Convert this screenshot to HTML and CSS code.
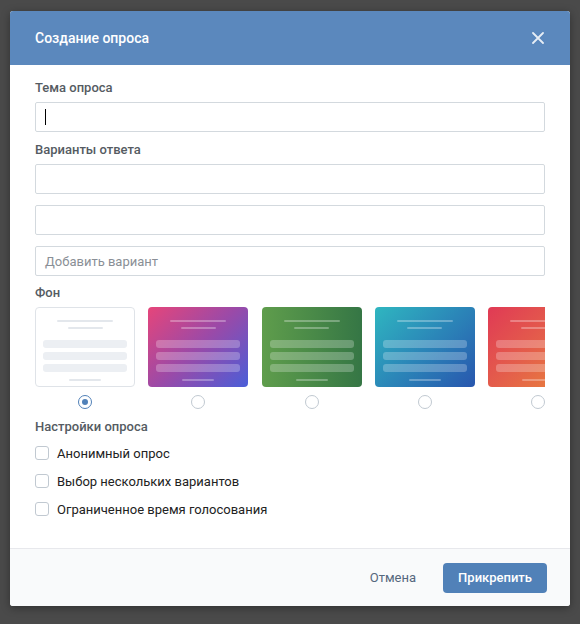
FILE: index.html
```html
<!DOCTYPE html>
<html lang="ru">
<head>
<meta charset="utf-8">
<title>Создание опроса</title>
<link rel="stylesheet" href="styles.css">
</head>
<body>
<div class="modal">
  <div class="modal-header">
    <div class="modal-title">Создание опроса</div>
    <svg class="close" width="12" height="12" viewBox="0 0 12 12"><path d="M1 1L11 11M11 1L1 11" stroke="#fff" stroke-width="1.8" stroke-linecap="round" opacity="0.85"/></svg>
  </div>
  <div class="modal-body">
    <div class="label">Тема опроса</div>
    <div class="input first"><span class="caret"></span></div>

    <div class="label">Варианты ответа</div>
    <div class="input"></div>
    <div class="input"></div>
    <div class="input placeholder">Добавить вариант</div>

    <div class="label">Фон</div>
    <div class="bg-row">
      <div class="bg-item">
        <div class="thumb thumb-white">
          <div class="ln ln1"></div><div class="ln ln2"></div>
          <div class="bar"></div><div class="bar"></div><div class="bar"></div>
          <div class="ln ln3"></div>
        </div>
        <div class="radio checked"></div>
      </div>
      <div class="bg-item">
        <div class="thumb thumb-pink">
          <div class="ln ln1"></div><div class="ln ln2"></div>
          <div class="bar"></div><div class="bar"></div><div class="bar"></div>
          <div class="ln ln3"></div>
        </div>
        <div class="radio"></div>
      </div>
      <div class="bg-item">
        <div class="thumb thumb-green">
          <div class="ln ln1"></div><div class="ln ln2"></div>
          <div class="bar"></div><div class="bar"></div><div class="bar"></div>
          <div class="ln ln3"></div>
        </div>
        <div class="radio"></div>
      </div>
      <div class="bg-item">
        <div class="thumb thumb-blue">
          <div class="ln ln1"></div><div class="ln ln2"></div>
          <div class="bar"></div><div class="bar"></div><div class="bar"></div>
          <div class="ln ln3"></div>
        </div>
        <div class="radio"></div>
      </div>
      <div class="bg-item">
        <div class="thumb thumb-red">
          <div class="ln ln1"></div><div class="ln ln2"></div>
          <div class="bar"></div><div class="bar"></div><div class="bar"></div>
          <div class="ln ln3"></div>
        </div>
        <div class="radio"></div>
      </div>
    </div>

    <div class="label settings">Настройки опроса</div>
    <div class="check-row"><span class="checkbox"></span><span>Анонимный опрос</span></div>
    <div class="check-row"><span class="checkbox"></span><span>Выбор нескольких вариантов</span></div>
    <div class="check-row"><span class="checkbox"></span><span>Ограниченное время голосования</span></div>
  </div>
  <div class="modal-footer">
    <span class="cancel">Отмена</span>
    <span class="btn">Прикрепить</span>
  </div>
</div>
</body>
</html>
```
FILE: styles.css
```css
* { box-sizing: border-box; }
html, body { margin: 0; padding: 0; }
body {
  background: #4a4a4a;
  font-family: Roboto, "Liberation Sans", Arial, sans-serif;
  width: 580px;
  height: 624px;
  overflow: hidden;
  padding: 11px 10px 0 10px;
}
.modal {
  width: 560px;
  background: #fff;
  border-radius: 3px;
  overflow: hidden;
  box-shadow: 0 2px 8px rgba(0,0,0,0.35);
}
.modal-header {
  height: 54px;
  background: #5b88bd;
  display: flex;
  align-items: center;
  justify-content: space-between;
  padding: 0 26px 0 25px;
}
.modal-title {
  color: #fff;
  font-size: 14px;
  font-weight: 500;
}
.modal-body {
  padding: 15px 25px 25px 25px;
}
.label {
  font-size: 13px;
  font-weight: 500;
  line-height: 16px;
  color: #555b62;
  margin-bottom: 6px;
}
.input {
  height: 30px;
  border: 1px solid #d3d9de;
  border-radius: 2px;
  margin-bottom: 11px;
  font-size: 13px;
  display: flex;
  align-items: center;
  padding-left: 9px;
}
.input.first { margin-bottom: 10px; }
.caret {
  width: 1px;
  height: 16px;
  background: #000;
}
.placeholder { color: #8a8f96; margin-bottom: 9px; }
.bg-row {
  display: flex;
  gap: 13.25px;
  overflow: hidden;
  margin-top: 2px;
}
.bg-item {
  flex: 0 0 100px;
  display: flex;
  flex-direction: column;
  align-items: center;
}
.thumb {
  width: 100px;
  height: 80px;
  border-radius: 4px;
  display: flex;
  flex-direction: column;
  align-items: center;
  padding-top: 13px;
}
.ln { height: 2px; border-radius: 1px; background: rgba(255,255,255,0.3); }
.ln1 { width: 56px; }
.ln2 { width: 35px; margin-top: 5px; }
.bar {
  width: 84px;
  height: 8px;
  border-radius: 3px;
  background: rgba(255,255,255,0.25);
  margin-top: 4px;
}
.ln2 + .bar { margin-top: 11px; }
.ln3 { width: 32px; margin-top: 7px; }
.thumb-white {
  border: 1px solid #dfe3e8;
  padding-top: 12px;
}
.thumb-white .ln { background: #e3e7ec; }
.thumb-white .bar { background: #eceff3; }
.thumb-pink { background: linear-gradient(135deg, #e6457a 0%, #9a4aa8 50%, #4a5ed8 100%); }
.thumb-green { background: linear-gradient(90deg, #5f9d4c 0%, #4a8a48 50%, #357645 100%); }
.thumb-blue { background: linear-gradient(135deg, #2fb6c0 0%, #2b86b8 50%, #2856ae 100%); }
.thumb-red { background: linear-gradient(135deg, #e03a55 0%, #e4604a 50%, #ea8a38 100%); }
.radio {
  width: 14px;
  height: 14px;
  border-radius: 50%;
  border: 1px solid #c1c9d1;
  margin-top: 8px;
  display: flex;
  align-items: center;
  justify-content: center;
}
.radio.checked { border-color: #5181b8; }
.radio.checked::after {
  content: "";
  width: 6px;
  height: 6px;
  border-radius: 50%;
  background: #5181b8;
}
.label.settings { margin-top: 10px; margin-bottom: 4px; }
.check-row {
  height: 28px;
  display: flex;
  align-items: center;
  font-size: 13px;
  color: #222;
}
.checkbox {
  width: 14px;
  height: 14px;
  border: 1px solid #c1c9d1;
  border-radius: 3px;
  margin-right: 8px;
  flex-shrink: 0;
}
.modal-footer {
  height: 58px;
  background: #f9fafb;
  border-top: 1px solid #e7e8ec;
  display: flex;
  align-items: center;
  justify-content: flex-end;
  padding: 0 23px 0 25px;
}
.cancel {
  font-size: 13px;
  color: #55677d;
  margin-right: 27px;
}
.btn {
  height: 30px;
  padding: 0 15px;
  border-radius: 4px;
  background: #5181b8;
  color: #fff;
  font-size: 13px;
  font-weight: 500;
  display: flex;
  align-items: center;
}
```
